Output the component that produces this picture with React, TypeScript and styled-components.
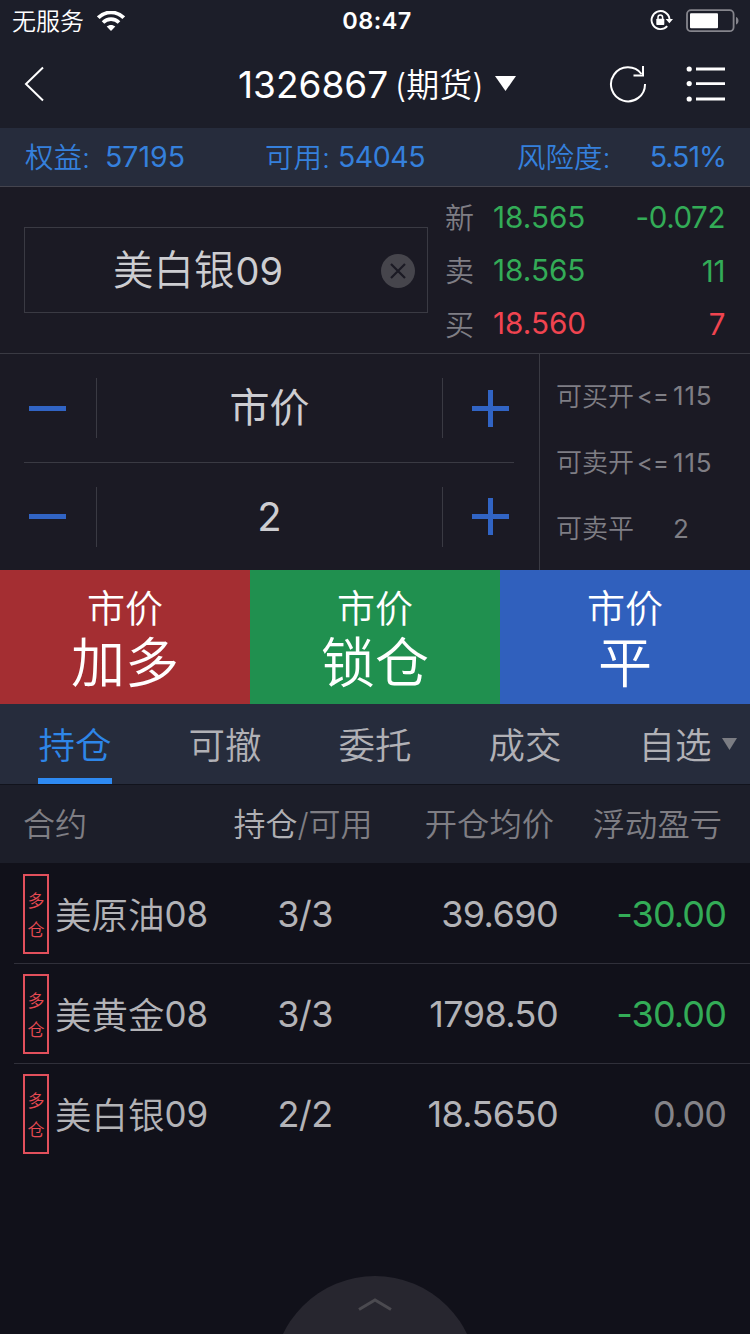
import React from 'react';
import styled, { createGlobalStyle } from 'styled-components';

const GlobalStyle = createGlobalStyle`
  * { box-sizing: border-box; }
  body {
    margin: 0;
    background: #11111a;
    font-family: Inter, "Noto Sans CJK SC", sans-serif;
    font-weight: 350;
    font-feature-settings: "calt" 0;
  }
`;

const color = {
  bar: '#1c1e29',
  panel: '#1b1a24',
  slate: '#262c3c',
  line: '#3a3a43',
  blue: '#3580dc',
  action: '#3164c4',
  green: '#33ac57',
  red: '#f04450',
  text: '#cdcdd1',
  muted: '#7f7e84',
};

const Screen = styled.div`
  position: relative;
  width: 750px;
  height: 1334px;
  overflow: hidden;
  display: flex;
  flex-direction: column;
  background: #11111a;
  white-space: nowrap;
`;

const Text = styled.span<{
  $size: number;
  $color?: string;
  $track?: number;
  $drop?: number;
}>`
  font-size: ${(p) => p.$size}px;
  line-height: 1;
  padding-top: ${(p) => p.$drop ?? 0}px;
  color: ${(p) => p.$color ?? 'inherit'};
  letter-spacing: ${(p) => p.$track ?? 0}px;
`;

const Num = styled(Text)`
  font-weight: 400;
`;

const Clock = styled(Text)`
  padding-left: 3px;
  font-weight: 600;
`;

const StatusBar = styled.header`
  height: 40px;
  padding: 1px 11px 0 12px;
  display: grid;
  grid-template-columns: 1fr auto 1fr;
  align-items: center;
  background: ${color.bar};
  color: #fff;
`;

const StatusGroup = styled.div<{ $end?: boolean }>`
  display: flex;
  align-items: center;
  justify-content: ${(p) => (p.$end ? 'flex-end' : 'flex-start')};
  gap: 13px;
`;

const NavBar = styled.nav`
  height: 88px;
  padding: 0 24px;
  display: grid;
  grid-template-columns: 214px 1fr auto;
  align-items: center;
  background: ${color.bar};
  color: #fff;
`;

const NavTitle = styled.div`
  display: flex;
  align-items: center;
  gap: 6.5px;
`;

const NavActions = styled.div`
  display: flex;
  align-items: center;
  gap: 39px;
`;

const AccountBar = styled.section`
  height: 59px;
  padding: 0 24px 0 25px;
  display: grid;
  grid-template-columns: 240px 252px 1fr;
  align-items: center;
  background: ${color.slate};
  border-bottom: 1px solid #44444e;
  color: ${color.blue};
`;

const AccountItem = styled.div<{ $gap?: number }>`
  display: flex;
  align-items: center;
  gap: ${(p) => p.$gap ?? 0}px;
  &:last-child { justify-content: space-between; }
`;

const QuotePanel = styled.section`
  height: 167px;
  padding: 0 25px 0 24px;
  display: flex;
  align-items: center;
  background: ${color.panel};
  border-bottom: 1px solid ${color.line};
`;

const ContractField = styled.div`
  width: 404px;
  height: 86px;
  padding: 1px 12px 0 88px;
  display: flex;
  align-items: center;
  justify-content: space-between;
  border: 1px solid ${color.line};
  color: ${color.text};
`;

const ContractName = styled.div`
  display: flex;
  align-items: center;
  gap: 1px;
`;

const QuoteList = styled.div`
  flex: 1;
  padding: 2px 0 0 17px;
`;

const QuoteRow = styled.div<{ $tone: string }>`
  height: 53.3px;
  display: grid;
  grid-template-columns: 48px 1fr auto;
  align-items: center;
  color: ${(p) => p.$tone};
`;

const EntryPanel = styled.section`
  height: 216px;
  display: flex;
  background: ${color.panel};
`;

const Steppers = styled.div`
  width: 540px;
  padding: 0 25px 0 24px;
  border-right: 1px solid ${color.line};
`;

const Stepper = styled.div`
  height: 108px;
  display: grid;
  grid-template-columns: 72px 1fr 71px;
  align-items: center;
  & + & { border-top: 1px solid ${color.line}; }
`;

const StepValue = styled.div`
  height: 60px;
  display: flex;
  align-items: center;
  justify-content: center;
  border-left: 1px solid ${color.line};
  border-right: 1px solid ${color.line};
  color: ${color.text};
`;

const StepButton = styled.div<{ $end?: boolean }>`
  display: flex;
  justify-content: ${(p) => (p.$end ? 'flex-end' : 'flex-start')};
  padding: 0 5px;
`;

const Limits = styled.div`
  flex: 1;
  padding: 9px 0 8px 16px;
  color: ${color.muted};
`;

const LimitRow = styled.div`
  height: 66.4px;
  display: grid;
  grid-template-columns: 81px 36px auto;
  align-items: center;
`;

const OrderButtons = styled.section`
  height: 134px;
  display: grid;
  grid-template-columns: repeat(3, 1fr);
`;

const OrderButton = styled.div<{ $fill: string }>`
  padding-top: 19px;
  display: flex;
  flex-direction: column;
  align-items: center;
  gap: 10px;
  background: ${(p) => p.$fill};
  color: #fff;
`;

const Tabs = styled.div`
  height: 81px;
  display: grid;
  grid-template-columns: repeat(5, 150px);
  background: ${color.slate};
  border-bottom: 1px solid #11131c;
`;

const Tab = styled.div<{ $active?: boolean }>`
  position: relative;
  height: 80px;
  display: flex;
  align-items: center;
  justify-content: center;
  color: ${(p) => (p.$active ? '#2e86e8' : '#b1b1b6')};
  &::after {
    content: '';
    display: ${(p) => (p.$active ? 'block' : 'none')};
    position: absolute;
    left: 38px;
    bottom: 0;
    width: 74px;
    height: 6px;
    background: #2e8af2;
  }
`;

const TabArrow = styled.svg`
  position: absolute;
  right: 13px;
  top: 34px;
`;

const columns = '200px 210px 148px 168px';

const TableHead = styled.div`
  height: 78px;
  padding-right: 24px;
  display: grid;
  grid-template-columns: ${columns};
  align-items: center;
  background: ${color.bar};
  color: ${color.muted};
`;

const Row = styled.div`
  position: relative;
  height: 100px;
  padding: 2px 24px 0 0;
  display: grid;
  grid-template-columns: ${columns};
  align-items: center;
  color: #b3b3b7;
  & + &::before {
    content: '';
    position: absolute;
    left: 14px;
    right: 0;
    top: 0;
    height: 1px;
    background: #30303a;
  }
`;

const Cell = styled.div<{ $align?: 'center' | 'end'; $left?: number; $right?: number; $tone?: string }>`
  display: flex;
  align-items: center;
  justify-content: ${(p) => p.$align ?? 'flex-start'};
  padding: 0 ${(p) => p.$right ?? 0}px 0 ${(p) => p.$left ?? 0}px;
  color: ${(p) => p.$tone ?? 'inherit'};
`;

const Tag = styled.div`
  width: 26px;
  height: 80px;
  margin-right: 6px;
  padding-top: 4px;
  flex: none;
  display: flex;
  flex-direction: column;
  align-items: center;
  justify-content: center;
  gap: 12px;
  border: 2px solid #e2505c;
  color: #e84a52;
`;

const Drawer = styled.div`
  position: absolute;
  left: 273px;
  top: 1276px;
  width: 204px;
  height: 204px;
  padding-top: 21px;
  display: flex;
  justify-content: center;
  border-radius: 50%;
  background: #27262f;
`;

const Minus = () => (
  <svg width="37" height="37" viewBox="0 0 37 37">
    <path d="M0 18.5H37" stroke={color.action} strokeWidth="5" />
  </svg>
);

const Plus = () => (
  <svg width="37" height="37" viewBox="0 0 37 37">
    <path d="M0 18.5H37M18.5 0V37" stroke={color.action} strokeWidth="5" />
  </svg>
);

const WifiIcon = () => (
  <svg width="28" height="20" viewBox="0 0 28 20" fill="none" stroke="#fff">
    <path d="M1.3 6.7C8.3 -.3 19.7 -.3 26.7 6.7" strokeWidth="3.8" />
    <path d="M6 11.4C10.4 7 17.6 7 22 11.4" strokeWidth="3.6" />
    <path d="M14 20L9.7 15.6C12 13.3 16 13.3 18.3 15.6Z" fill="#fff" stroke="none" />
  </svg>
);

const LockIcon = () => (
  <svg width="23" height="22" viewBox="0 0 23 22" fill="none" stroke="#fff">
    <path d="M17.2 16.2A9 9 0 1 1 19.5 9" strokeWidth="1.9" />
    <path d="M15.6 9H23L19.4 13.3Z" fill="#fff" stroke="none" />
    <rect x="6.3" y="8.7" width="8" height="6.3" rx="0.8" fill="#fff" stroke="none" />
    <path d="M8 9.5V7.3A2.3 2.3 0 0 1 12.6 7.3V9.5" strokeWidth="1.5" />
  </svg>
);

const BatteryIcon = () => (
  <svg width="53" height="24" viewBox="0 0 53 24">
    <rect x="1" y="1.2" width="46.6" height="21" rx="4" fill="none" stroke="#85858c" strokeWidth="1.8" />
    <rect x="4" y="4.2" width="28" height="15" rx="1" fill="#fff" />
    <path d="M50 8C53.3 9 53.3 14.5 50 15.5Z" fill="#85858c" />
  </svg>
);

const quotes = [
  { label: '新', price: '18.565', value: '-0.072', tone: color.green },
  { label: '卖', price: '18.565', value: '11', tone: color.green },
  { label: '买', price: '18.560', value: '7', tone: color.red },
];

const limits = [
  { label: '可买开', op: '<=', value: '115' },
  { label: '可卖开', op: '<=', value: '115' },
  { label: '可卖平', op: '', value: '2' },
];

const orders = [
  { action: '加多', fill: '#a42e32' },
  { action: '锁仓', fill: '#20904f' },
  { action: '平', fill: '#3060bd' },
];

const tabs = ['持仓', '可撤', '委托', '成交', '自选'];

const positions = [
  { name: '美原油', month: '08', amount: '3/3', price: '39.690', profit: '-30.00', tone: color.green },
  { name: '美黄金', month: '08', amount: '3/3', price: '1798.50', profit: '-30.00', tone: color.green },
  { name: '美白银', month: '09', amount: '2/2', price: '18.5650', profit: '0.00', tone: '#858489' },
];

export default function App() {
  return (
    <Screen>
      <GlobalStyle />
      <StatusBar>
        <StatusGroup>
          <Text $size={24} $drop={2}>无服务</Text>
          <WifiIcon />
        </StatusGroup>
        <Clock $size={23.5} $track={0.5}>08:47</Clock>
        <StatusGroup $end>
          <LockIcon />
          <BatteryIcon />
        </StatusGroup>
      </StatusBar>

      <NavBar>
        <svg width="20" height="36" viewBox="0 0 20 36" fill="none" stroke="#fff" strokeWidth="2">
          <path d="M19 1.5L2 18L19 34.5" />
        </svg>
        <NavTitle>
          <Num $size={37}>1326867</Num>
          <Text $size={33} $drop={3}>(期货)</Text>
          <svg width="26" height="16" viewBox="0 0 26 16">
            <path d="M5 0H26L15.5 15Z" fill="#fff" />
          </svg>
        </NavTitle>
        <NavActions>
          <svg width="38" height="38" viewBox="0 0 38 38" fill="none" stroke="#fff" strokeWidth="2">
            <path d="M36 19A17 17 0 1 1 32.5 9" />
            <path d="M34 1V10.5H24.5" />
          </svg>
          <svg width="40" height="36" viewBox="0 0 40 36" stroke="#fff" strokeWidth="2.8">
            <path d="M10 3H39M10 17.6H39M10 33H39" />
            <g fill="#fff" stroke="none">
              <circle cx="3.2" cy="3" r="2.6" />
              <circle cx="3.2" cy="17.6" r="2.6" />
              <circle cx="3.2" cy="33" r="2.6" />
            </g>
          </svg>
        </NavActions>
      </NavBar>

      <AccountBar>
        <AccountItem $gap={15}>
          <Text $size={28.5} $drop={2}>权益:</Text>
          <Num $size={28.5} $drop={1}>57195</Num>
        </AccountItem>
        <AccountItem $gap={8}>
          <Text $size={28.5} $drop={2}>可用:</Text>
          <Num $size={28.5} $drop={1} $track={-0.5}>54045</Num>
        </AccountItem>
        <AccountItem>
          <Text $size={28.5} $drop={2}>风险度:</Text>
          <Num $size={28.5} $drop={1} $track={-1}>5.51%</Num>
        </AccountItem>
      </AccountBar>

      <QuotePanel>
        <ContractField>
          <ContractName>
            <Text $size={40.5} $drop={1}>美白银</Text>
            <Num $size={38}>09</Num>
          </ContractName>
          <svg width="34" height="34" viewBox="0 0 34 34">
            <circle cx="17" cy="17" r="17" fill="#46454c" />
            <path d="M10 10L24 24M24 10L10 24" stroke="#1b1a24" strokeWidth="2.2" />
          </svg>
        </ContractField>
        <QuoteList>
          {quotes.map((q) => (
            <QuoteRow key={q.label} $tone={q.tone}>
              <Text $size={29} $drop={2} $color={color.muted}>{q.label}</Text>
              <Num $size={29.7}>{q.price}</Num>
              <Num $size={29.5} $drop={1} $track={-0.4}>{q.value}</Num>
            </QuoteRow>
          ))}
        </QuoteList>
      </QuotePanel>

      <EntryPanel>
        <Steppers>
          {['市价', '2'].map((value) => (
            <Stepper key={value}>
              <StepButton><Minus /></StepButton>
              <StepValue><Num as={value === '2' ? undefined : Text} $size={40}>{value}</Num></StepValue>
              <StepButton $end><Plus /></StepButton>
            </Stepper>
          ))}
        </Steppers>
        <Limits>
          {limits.map((l) => (
            <LimitRow key={l.label}>
              <Text $size={26} $drop={1}>{l.label}</Text>
              <Num $size={24}>{l.op}</Num>
              <Num $size={26} $track={0.8}>{l.value}</Num>
            </LimitRow>
          ))}
        </Limits>
      </EntryPanel>

      <OrderButtons>
        {orders.map((o) => (
          <OrderButton key={o.action} $fill={o.fill}>
            <Text $size={38}>市价</Text>
            <Text $size={54}>{o.action}</Text>
          </OrderButton>
        ))}
      </OrderButtons>

      <Tabs>
        {tabs.map((name, i) => (
          <Tab key={name} $active={i === 0}>
            <Text $size={36.5} $drop={4}>{name}</Text>
            {i === 4 && (
              <TabArrow width="15" height="12" viewBox="0 0 15 12">
                <path d="M0 0H15L7.5 12Z" fill="#7b7d83" />
              </TabArrow>
            )}
          </Tab>
        ))}
      </Tabs>

      <TableHead>
        <Cell $left={23}><Text $size={32} $drop={2}>合约</Text></Cell>
        <Cell $align="center" $right={4}>
          <Text $size={32} $drop={2} $color="#b0b0b4">持仓</Text>
          <Text $size={32} $drop={2}>/可用</Text>
        </Cell>
        <Cell $align="end" $right={4}><Text $size={32.3} $drop={2}>开仓均价</Text></Cell>
        <Cell $align="end" $right={4}><Text $size={32.3} $drop={2}>浮动盈亏</Text></Cell>
      </TableHead>

      {positions.map((p) => (
        <Row key={p.name}>
          <Cell $left={23}>
            <Tag>
              <Text $size={17}>多</Text>
              <Text $size={17}>仓</Text>
            </Tag>
            <Text $size={36.5} $drop={4}>{p.name}</Text>
            <Num $size={35} $drop={1}>{p.month}</Num>
          </Cell>
          <Cell $align="center"><Num $size={36} $track={-0.6}>{p.amount}</Num></Cell>
          <Cell $align="end"><Num $size={36} $track={-0.6}>{p.price}</Num></Cell>
          <Cell $align="end" $tone={p.tone}><Num $size={36} $track={-0.9}>{p.profit}</Num></Cell>
        </Row>
      ))}

      <Drawer>
        <svg width="34" height="14" viewBox="0 0 34 14" fill="none" stroke="#4b4a50" strokeWidth="3">
          <path d="M1 12.5L17 3L33 12.5" />
        </svg>
      </Drawer>
    </Screen>
  );
}
